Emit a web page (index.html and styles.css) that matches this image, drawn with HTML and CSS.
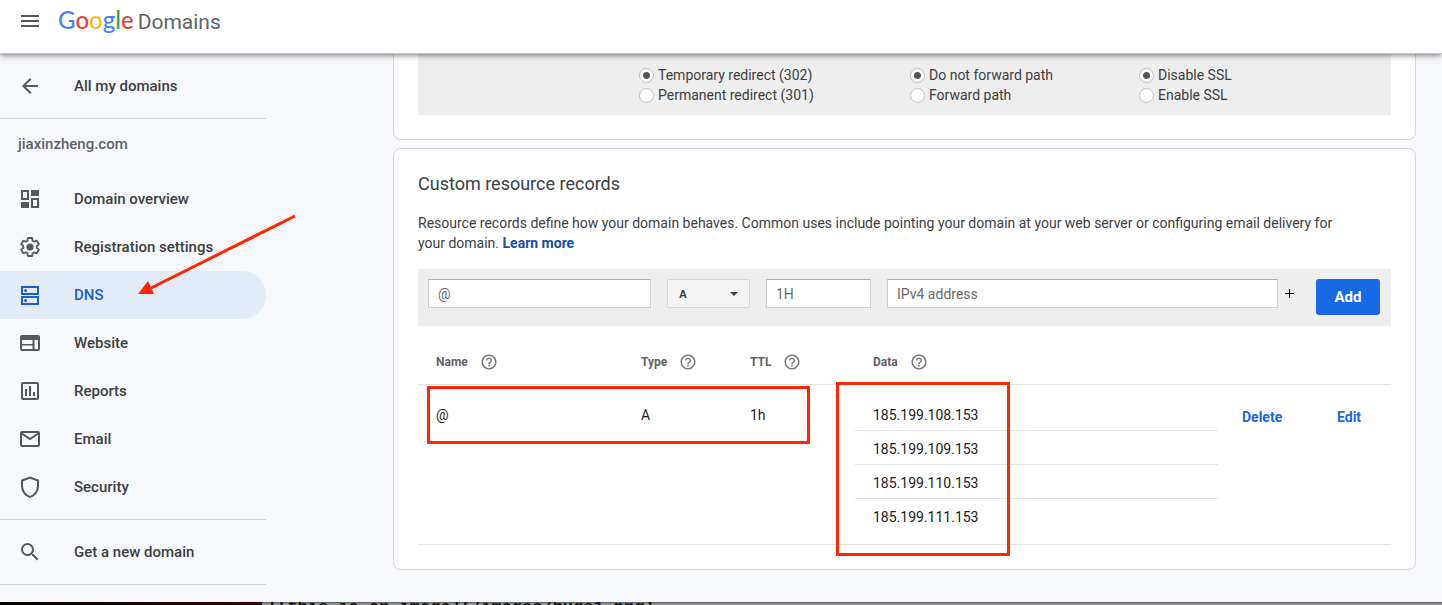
FILE: index.html
```html
<!DOCTYPE html>
<html lang="en">
<head>
<meta charset="utf-8">
<title>Google Domains - DNS</title>
<link rel="stylesheet" href="styles.css">
</head>
<body>
<svg class="defs" aria-hidden="true">
  <symbol id="help" viewBox="0 0 24 24"><path d="M11 18h2v-2h-2v2zm1-16C6.480 2 2 6.480 2 12s4.480 10 10 10 10-4.480 10-10S17.520 2 12 2zm0 18c-4.410 0-8-3.590-8-8s3.590-8 8-8 8 3.590 8 8-3.590 8-8 8zm0-14c-2.210 0-4 1.790-4 4h2c0-1.100.9-2 2-2s2 .9 2 2c0 2-3 1.750-3 5h2c0-2.250 3-2.500 3-5 0-2.210-1.790-4-4-4z"/></symbol>
</svg>

<header class="topbar">
  <button class="icon-button" aria-label="Main menu">
    <svg class="icon" viewBox="0 0 24 24"><path d="M3 6h18v2H3zm0 5h18v2H3zm0 5h18v2H3z"/></svg>
  </button>
  <a class="brand" href="#"><span class="google"><span class="blue">G</span><span class="red">o</span><span class="yellow">o</span><span class="blue">g</span><span class="green">l</span><span class="red">e</span></span><span class="product">Domains</span></a>
</header>

<div class="layout">
  <nav class="sidebar">
    <a class="nav-item nav-edge" href="#">
      <svg class="icon" viewBox="0 0 24 24"><path d="M20 11H7.830l5.590-5.590L12 4l-8 8 8 8 1.410-1.410L7.830 13H20z"/></svg>
      All my domains
    </a>
    <div class="domain-name">jiaxinzheng.com</div>
    <a class="nav-item" href="#">
      <svg class="icon" viewBox="0 0 24 24"><path fill-rule="evenodd" d="M3 3h8v10H3zm2 2v6h4V5zM13 3h8v6h-8zM3 15h8v6H3zM13 11h8v10h-8zm2 2v6h4v-6z"/></svg>
      Domain overview
    </a>
    <a class="nav-item" href="#">
      <svg class="icon" viewBox="0 0 24 24"><path class="line" transform="translate(1.200 1.200) scale(.9)" d="M19.430 12.980c.04-.32.07-.64.07-.98 0-.34-.03-.66-.07-.98l2.110-1.650c.19-.15.24-.42.12-.64l-2-3.460c-.09-.16-.26-.25-.44-.25-.06 0-.12.01-.17.03l-2.490 1c-.52-.4-1.080-.73-1.690-.98l-.38-2.650C14.460 2.180 14.250 2 14 2h-4c-.25 0-.46.18-.49.42l-.38 2.650c-.61.25-1.170.59-1.690.98l-2.490-1c-.06-.02-.12-.03-.18-.03-.17 0-.34.09-.43.25l-2 3.460c-.13.22-.07.49.12.64l2.110 1.650c-.04.32-.07.65-.07.98 0 .33.03.66.07.98l-2.110 1.650c-.19.15-.24.42-.12.64l2 3.460c.09.16.26.25.44.25.06 0 .12-.01.17-.03l2.490-1c.52.4 1.080.73 1.690.98l.38 2.650c.03.24.24.42.49.42h4c.25 0 .46-.18.49-.42l.38-2.650c.61-.25 1.170-.59 1.690-.98l2.490 1c.06.02.12.03.18.03.17 0 .34-.09.43-.25l2-3.460c.12-.22.07-.49-.12-.64z"/><circle cx="12" cy="12" r="3.600"/></svg>
      Registration settings
    </a>
    <a class="nav-item active" href="#" aria-current="page">
      <svg class="icon" viewBox="0 0 24 24"><path class="line" d="M4 4h16v7H4zM4 14h16v7H4z"/><circle cx="7.500" cy="7.500" r="1.500"/><circle cx="7.500" cy="17.500" r="1.500"/></svg>
      DNS
    </a>
    <a class="nav-item" href="#">
      <svg class="icon" viewBox="0 0 24 24"><path fill-rule="evenodd" d="M4 4h16a2 2 0 0 1 2 2v12a2 2 0 0 1-2 2H4a2 2 0 0 1-2-2V6a2 2 0 0 1 2-2zM4 9v4h10.500V9zM4 14.500V18h10.500v-3.500zM16.500 9v9H20V9z"/></svg>
      Website
    </a>
    <a class="nav-item" href="#">
      <svg class="icon" viewBox="0 0 24 24"><rect class="line" x="4" y="4" width="16" height="16" rx="1"/><path d="M7 10h2v7H7zm4-3h2v10h-2zm4 6h2v4h-2z"/></svg>
      Reports
    </a>
    <a class="nav-item" href="#">
      <svg class="icon" viewBox="0 0 24 24"><rect class="line" x="3" y="5" width="18" height="14" rx="1"/><path class="line" d="M3 6l9 6 9-6"/></svg>
      Email
    </a>
    <a class="nav-item" href="#">
      <svg class="icon" viewBox="0 0 24 24"><path class="line" d="M12 2.500l8 3V11c0 5-3.400 9.600-8 11-4.600-1.400-8-6-8-11V5.500z"/></svg>
      Security
    </a>
    <a class="nav-item nav-edge nav-search" href="#">
      <svg class="icon" viewBox="0 0 24 24"><path d="M15.500 14h-.79l-.28-.27A6.471 6.471 0 0 0 16 9.500 6.500 6.500 0 1 0 9.500 16c1.610 0 3.090-.59 4.230-1.570l.27.28v.79l5 4.990L20.490 19l-4.990-5zm-6 0C7.010 14 5 11.990 5 9.500S7.010 5 9.500 5 14 7.010 14 9.500 11.990 14 9.500 14z"/></svg>
      Get a new domain
    </a>
    <svg class="arrow" viewBox="0 0 160 86" aria-hidden="true"><path d="M158 3L14 75" stroke="#ff2600" stroke-width="3"/><path d="M1 81L11 68L17 81z" fill="#ff2600"/></svg>
  </nav>

  <main class="content">
    <section class="card card-forwarding">
      <form class="forwarding">
        <div class="choices">
          <label><input type="radio" name="redirect" checked>Temporary redirect (302)</label>
          <label><input type="radio" name="redirect">Permanent redirect (301)</label>
        </div>
        <div class="choices">
          <label><input type="radio" name="path" checked>Do not forward path</label>
          <label><input type="radio" name="path">Forward path</label>
        </div>
        <div class="choices">
          <label><input type="radio" name="ssl" checked>Disable SSL</label>
          <label><input type="radio" name="ssl">Enable SSL</label>
        </div>
      </form>
    </section>

    <section class="card">
      <h2>Custom resource records</h2>
      <p>Resource records define how your domain behaves. Common uses include pointing your domain at your web server or configuring email delivery for your domain. <a class="learn" href="#">Learn more</a></p>
      <form class="add-record">
        <input class="field" type="text" placeholder="@" aria-label="Name">
        <span class="select-wrap">
          <select aria-label="Type"><option>A</option></select>
          <svg class="caret" viewBox="0 0 8 4"><path d="M0 0h8L4 4z"/></svg>
        </span>
        <input class="field" type="text" placeholder="1H" aria-label="TTL">
        <span class="data-entry">
          <input class="field" type="text" placeholder="IPv4 address" aria-label="IPv4 address">
          <button class="plus" type="button" aria-label="Add another value"><svg viewBox="0 0 9 9"><path d="M4 0h1v4h4v1H5v4H4V5H0V4h4z"/></svg></button>
        </span>
        <button class="add" type="button">Add</button>
      </form>
      <div class="records">
        <table>
          <colgroup><col class="c-name"><col class="c-type"><col class="c-ttl"><col><col class="c-actions"></colgroup>
          <thead>
            <tr>
              <th><span class="head">Name <svg class="help"><use href="#help"/></svg></span></th>
              <th><span class="head">Type <svg class="help"><use href="#help"/></svg></span></th>
              <th><span class="head">TTL <svg class="help"><use href="#help"/></svg></span></th>
              <th><span class="head">Data <svg class="help"><use href="#help"/></svg></span></th>
              <th></th>
            </tr>
          </thead>
          <tbody>
            <tr>
              <td>@</td>
              <td>A</td>
              <td>1h</td>
              <td class="data-cell">
                <ul>
                  <li>185.199.108.153</li>
                  <li>185.199.109.153</li>
                  <li>185.199.110.153</li>
                  <li>185.199.111.153</li>
                </ul>
              </td>
              <td class="actions"><div class="action-row"><button type="button">Delete</button><button type="button">Edit</button></div></td>
            </tr>
          </tbody>
        </table>
        <div class="mark mark-row"></div>
        <div class="mark mark-data"></div>
      </div>
    </section>
  </main>
</div>

<div class="behind"><div class="behind-photo"></div><code>![this is an image](/images/huge1.png)</code></div>
</body>
</html>
```

FILE: styles.css
```css
* { box-sizing: border-box; }

body {
  margin: 0;
  height: 100vh;
  display: flex;
  flex-direction: column;
  overflow: hidden;
  background: #f7f8fb;
  color: #3c4043;
  font: 14px/20px Roboto, "Liberation Sans", sans-serif;
}

a { color: inherit; text-decoration: none; }
button, input, select { font: inherit; color: inherit; }
button { border: 0; padding: 0; background: none; cursor: pointer; }
.defs { display: none; }

.icon { width: 24px; height: 24px; flex: none; fill: #55585c; }
.line { fill: none; stroke: #55585c; stroke-width: 2; }

/* Top bar */
.topbar {
  position: relative;
  z-index: 2;
  flex: none;
  display: flex;
  align-items: center;
  gap: 16px;
  height: 54px;
  padding: 0 18px 11px;
  background: #fff;
  border-bottom: 1px solid #c4c5c6;
  box-shadow: 0 1px 6px rgba(0, 0, 0, .55);
}
.icon-button { display: flex; }
.brand { display: flex; align-items: baseline; gap: 4px; line-height: 30px; font-family: Lato, Roboto, sans-serif; }
.google { font-size: 24px; font-weight: 500; }
.product { font-size: 21px; font-family: Roboto, sans-serif; color: #5f6368; }
.blue { color: #4285f4; }
.red { color: #ea4335; }
.yellow { color: #fbbc05; }
.green { color: #34a853; }

/* Page columns */
.layout { flex: 1; min-height: 0; display: flex; overflow: hidden; }

.sidebar { position: relative; width: 266px; flex: none; font-size: 15px; font-weight: 500; }
.nav-item {
  display: flex;
  align-items: center;
  gap: 32px;
  height: 48px;
  padding-left: 18px;
  border-radius: 0 24px 24px 0;
}
.nav-edge { height: 65px; border-bottom: 1px solid #d0d2d5; border-radius: 0; }
.nav-search { height: 66px; margin-top: 8px; border-top: 1px solid #d0d2d5; }
.domain-name { padding: 15px 18px 21px; color: #5f6368; }
.active { background: #e4ebf8; color: #1a5dd0; }
.active .icon { fill: #1a5dd0; }
.active .line { stroke: #1a5dd0; }
.arrow { position: absolute; left: 137px; top: 159px; width: 160px; height: 86px; }

.content { flex: 1; min-width: 0; padding: 0 26px 0 127px; }
.card {
  margin-bottom: 8px;
  padding: 24px;
  background: #fff;
  border: 1px solid #d3d5dc;
  border-radius: 8px;
}

/* Forwarding options */
.card-forwarding { padding-top: 0; border-top: 0; border-radius: 0 0 8px 8px; }
.forwarding {
  display: grid;
  grid-template-columns: 271px 229px 1fr;
  padding: 11px 0 10px 221px;
  background: #eee;
}
.choices label { display: flex; align-items: center; gap: 4px; }
.choices input {
  appearance: none;
  width: 15px;
  height: 15px;
  margin: 0;
  border: 1px solid #bdbdbd;
  border-radius: 50%;
  background: #fff;
}
.choices input:checked { background: radial-gradient(circle, #555 3px, #fff 4px); }

/* Resource records */
h2 { margin: 0 0 18px; font-size: 18px; line-height: 22px; font-weight: 400; }
p { margin: 0 0 16px; padding-right: 36px; }
.learn { color: #174ea6; font-weight: 700; }

.add-record {
  display: grid;
  grid-template-columns: 223px 83px 105px 1fr 64px;
  column-gap: 16px;
  align-items: start;
  padding: 10px 11px 11px 10px;
  background: #eee;
}
.field {
  width: 100%;
  min-width: 0;
  height: 29px;
  padding: 0 9px;
  border: 1px solid #cfcfcf;
  border-top-color: #b0b0b0;
  background: #fff;
}
.field::placeholder { color: #6a6a6a; opacity: 1; }
.select-wrap { position: relative; display: flex; }
select {
  appearance: none;
  width: 100%;
  height: 29px;
  padding: 0 11px;
  border: 1px solid #d8d8d8;
  border-radius: 2px;
  background: #f3f3f3;
  font: 700 11px "Liberation Sans", sans-serif;
}
.caret { position: absolute; right: 12px; top: 13px; width: 8px; height: 4px; fill: #444; pointer-events: none; }
.data-entry { display: flex; gap: 7px; padding-right: 6px; }
.plus { display: flex; align-items: center; height: 29px; }
.plus svg { width: 9px; height: 9px; }
.add { height: 36px; border-radius: 3px; background: #1769e6; color: #fff; font-size: 15px; font-weight: 700; }

.records { position: relative; }
table { width: 100%; table-layout: fixed; border-collapse: collapse; }
.c-name { width: 205px; }
.c-type { width: 109px; }
.c-ttl { width: 123px; }
.c-actions { width: 173px; }
th { padding: 26px 0 12px 18px; border-bottom: 1px solid #e4e4e4; text-align: left; font-size: 12px; font-weight: 700; color: #5f6368; }
.head { display: flex; align-items: center; gap: 12px; }
.help { width: 18px; height: 18px; fill: #777; }
td { padding: 20px 0 12px 18px; border-bottom: 1px solid #e4e4e4; vertical-align: top; color: #212121; }
.data-cell { padding: 12px 0; }
ul { list-style: none; margin: 0; padding: 0; }
li { padding: 8px 18px 5px; border-bottom: 1px solid #e4e4e4; }
li:last-child { border-bottom: 0; }
.actions { padding: 22px 0 0 24px; }
.action-row { display: grid; grid-template-columns: 95px 1fr; justify-items: start; }
.action-row button { color: #1a66e4; font-weight: 700; }

/* Highlight boxes drawn over the table */
.mark { position: absolute; border: 3px solid #ff2600; pointer-events: none; }
.mark-row { left: 9px; top: 60px; width: 383px; height: 58px; }
.mark-data { left: 418px; top: 56px; width: 174px; height: 174px; }

/* Desktop peeking out under the window */
.behind { flex: none; display: flex; gap: 5px; height: 3px; overflow: hidden; background: linear-gradient(#555, #999 2px); }
.behind-photo { width: 262px; background: linear-gradient(90deg, #000, #400000); }
.behind code { font: 700 17px/12px "Liberation Mono", monospace; color: #111; }
```
